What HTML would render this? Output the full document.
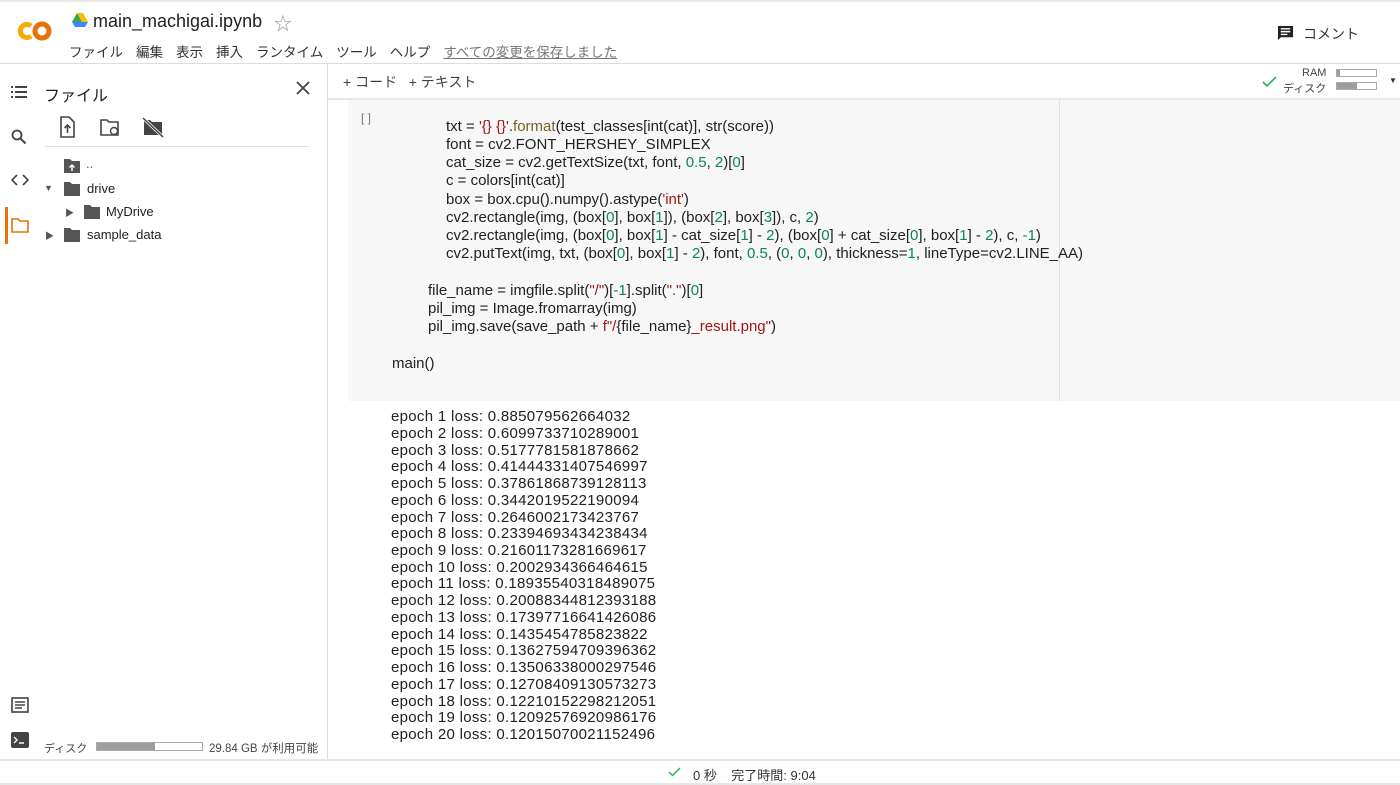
<!DOCTYPE html>
<html><head><meta charset="utf-8"><style>
*{box-sizing:border-box;margin:0;padding:0}
body{width:1400px;height:785px;overflow:hidden;background:#fff;font-family:"Liberation Sans","Noto Sans CJK JP",sans-serif;color:#212121;position:relative}
.abs{position:absolute}
.menu span{margin-right:13px}
.code div{position:absolute;white-space:pre;font-size:15px;letter-spacing:0;color:#212121}
.r{color:#a31515}.g{color:#098658}.b{color:#795e26}
.out div{position:absolute;left:391px;font-size:15px;letter-spacing:0.3px;color:#212121;white-space:pre}
.ft{font-size:13px}
</style></head><body>
<div class="abs" style="left:0;top:0;width:1400px;height:2px;background:#e8e8e8"></div>
<!-- logo -->
<svg class="abs" style="left:14px;top:18px" width="40" height="26" viewBox="0 0 40 26"><path d="M17 8a6.5 6.5 0 1 0 0 10" fill="none" stroke="#f9ab00" stroke-width="5"/><circle cx="28" cy="13" r="7" fill="none" stroke="#e8710a" stroke-width="5"/></svg>
<svg class="abs" style="left:72px;top:13px" width="16" height="14" viewBox="0 0 16 14"><path d="M5 0h6l5 9h-6z" fill="#fbbc04"/><path d="M5 0l5 9-3 5-7-5z" fill="#34a853"/><path d="M0 9l3 5h10l3-5z" fill="#4285f4"/></svg>
<div class="abs" style="left:93px;top:11px;font-size:18px">main_machigai.ipynb</div>
<div class="abs" style="left:274px;top:10px;font-size:18px;color:#999">☆</div>
<div class="abs menu" style="left:69px;top:41px;font-size:13.5px;color:#333"><span>ファイル</span><span>編集</span><span>表示</span><span>挿入</span><span>ランタイム</span><span>ツール</span><span>ヘルプ</span><span style="color:#777;text-decoration:underline">すべての変更を保存しました</span></div>
<svg class="abs" style="left:1277px;top:25px" width="17" height="17" viewBox="0 0 18 18"><path d="M1 1h16v12H4l-3 3z" fill="#222"/><path d="M4 4h10M4 7h10M4 10h7" stroke="#fff" stroke-width="1.5"/></svg>
<div class="abs" style="left:1303px;top:24px;font-size:14px;color:#333">コメント</div>
<div class="abs" style="left:0;top:63px;width:1400px;height:1px;background:#ddd"></div>
<!-- left rail -->
<svg class="abs" style="left:11px;top:85px" width="18" height="14"><g fill="#444"><rect x="0" y="1" width="2" height="2"/><rect x="0" y="6" width="2" height="2"/><rect x="0" y="11" width="2" height="2"/><rect x="4" y="1" width="12" height="2"/><rect x="4" y="6" width="12" height="2"/><rect x="4" y="11" width="12" height="2"/></g></svg>
<svg class="abs" style="left:11px;top:129px" width="16" height="16"><circle cx="6" cy="6" r="4.5" stroke="#444" stroke-width="1.8" fill="none"/><path d="M9.5 9.5l5 5" stroke="#444" stroke-width="2"/></svg>
<svg class="abs" style="left:11px;top:174px" width="18" height="12"><path d="M6 1L1 6l5 5M12 1l5 5-5 5" stroke="#444" stroke-width="1.6" fill="none"/></svg>
<div class="abs" style="left:5px;top:207px;width:3px;height:37px;background:#e8710a"></div>
<svg class="abs" style="left:11px;top:218px" width="18" height="15"><path d="M1 1h6l2 2h8v11H1z" fill="none" stroke="#e8710a" stroke-width="1.6"/></svg>
<svg class="abs" style="left:11px;top:697px" width="18" height="16"><rect x="1" y="1" width="16" height="14" fill="none" stroke="#444" stroke-width="1.6"/><path d="M4 5h10M4 8h10M4 11h7" stroke="#444" stroke-width="1.4"/></svg>
<svg class="abs" style="left:11px;top:732px" width="18" height="16"><rect x="0" y="0" width="18" height="16" rx="2" fill="#444"/><path d="M3 5l3 3-3 3M8 11h5" stroke="#fff" stroke-width="1.4" fill="none"/></svg>
<!-- file panel -->
<div class="abs" style="left:44px;top:82px;font-size:16px">ファイル</div>
<svg class="abs" style="left:296px;top:81px" width="14" height="14"><path d="M1 1l12 12M13 1L1 13" stroke="#444" stroke-width="1.8"/></svg>
<svg class="abs" style="left:58px;top:116px" width="120" height="22"><path d="M3 1h8l5 5v15H3z" fill="none" stroke="#444" stroke-width="1.6"/><path d="M9.5 17V9M6.5 12l3-3 3 3" stroke="#444" stroke-width="1.6" fill="none"/><path d="M43 4h6l2 2h9v13H43z" fill="none" stroke="#444" stroke-width="1.6"/><circle cx="56" cy="15" r="3.5" fill="#fff" stroke="#444" stroke-width="1.4"/><path d="M86 4h6l2 2h10v13H86z" fill="#444"/><path d="M85 2l20 19" stroke="#fff" stroke-width="3"/><path d="M85 2l20 19" stroke="#444" stroke-width="1.5"/></svg>
<div class="abs" style="left:45px;top:146px;width:264px;height:1px;background:#ddd"></div>
<svg class="abs" style="left:64px;top:159px" width="16" height="14"><path d="M0 0h6l2 2h8v12H0z" fill="#555"/><path d="M8 12V6M5.5 8.5L8 6l2.5 2.5" stroke="#fff" stroke-width="1.5" fill="none"/></svg>
<div class="abs ft" style="left:86px;top:156px;color:#555">..</div>
<div class="abs" style="left:44px;top:183px;font-size:9px;color:#555">▼</div>
<svg class="abs" style="left:64px;top:182px" width="16" height="14"><path d="M0 0h6l2 2h8v12H0z" fill="#555"/></svg>
<div class="abs ft" style="left:87px;top:181px">drive</div>
<div class="abs" style="left:65px;top:206px;font-size:9px;color:#555">▶</div>
<svg class="abs" style="left:84px;top:205px" width="16" height="14"><path d="M0 0h6l2 2h8v12H0z" fill="#555"/></svg>
<div class="abs ft" style="left:106px;top:204px">MyDrive</div>
<div class="abs" style="left:45px;top:229px;font-size:9px;color:#555">▶</div>
<svg class="abs" style="left:64px;top:228px" width="16" height="14"><path d="M0 0h6l2 2h8v12H0z" fill="#555"/></svg>
<div class="abs ft" style="left:87px;top:227px">sample_data</div>
<div class="abs" style="left:44px;top:740px;font-size:11px;color:#444">ディスク</div>
<div class="abs" style="left:96px;top:742px;width:107px;height:9px;border:1px solid #aaa;background:#fff"><div style="width:58px;height:7px;background:#9e9e9e"></div></div>
<div class="abs" style="left:209px;top:740px;font-size:11.5px;color:#444">29.84 GB が利用可能</div>
<div class="abs" style="left:327px;top:64px;width:1px;height:696px;background:#ddd"></div>
<!-- toolbar -->
<div class="abs" style="left:343px;top:72px;font-size:14px;color:#444">+ コード&nbsp;&nbsp;&nbsp;+ テキスト</div>
<svg class="abs" style="left:1262px;top:76px" width="15" height="12"><path d="M1 6l4 4 9-9" stroke="#2cb34a" stroke-width="1.6" fill="none"/></svg>
<div class="abs" style="left:1302px;top:67px;font-size:11px;color:#444">RAM</div>
<div class="abs" style="left:1283px;top:80px;font-size:11px;color:#444">ディスク</div>
<div class="abs" style="left:1336px;top:69px;width:41px;height:8px;border:1px solid #aaa"><div style="width:3px;height:6px;background:#9e9e9e"></div></div>
<div class="abs" style="left:1336px;top:82px;width:41px;height:8px;border:1px solid #aaa"><div style="width:20px;height:6px;background:#9e9e9e"></div></div>
<div class="abs" style="left:1389px;top:76px;font-size:8px;color:#333">▼</div>
<div class="abs" style="left:328px;top:98px;width:1072px;height:2px;background:#e6e6e6"></div>
<!-- cell -->
<div class="abs" style="left:348px;top:100px;width:1052px;height:301px;background:#f7f7f7"></div>
<div class="abs" style="left:1059px;top:100px;width:1px;height:301px;background:#e0e0e0"></div>
<div class="abs" style="left:361px;top:111px;font-size:12px;color:#777">[ ]</div>
<div class="code">
<div style="left:446px;top:118px">txt = <span class="r">'{} {}'</span>.<span class="b">format</span>(test_classes[int(cat)], str(score))</div>
<div style="left:446px;top:136px">font = cv2.FONT_HERSHEY_SIMPLEX</div>
<div style="left:446px;top:154px">cat_size = cv2.getTextSize(txt, font, <span class="g">0.5</span>, <span class="g">2</span>)[<span class="g">0</span>]</div>
<div style="left:446px;top:172px">c = colors[int(cat)]</div>
<div style="left:446px;top:191px">box = box.cpu().numpy().astype(<span class="r">'int'</span>)</div>
<div style="left:446px;top:209px">cv2.rectangle(img, (box[<span class="g">0</span>], box[<span class="g">1</span>]), (box[<span class="g">2</span>], box[<span class="g">3</span>]), c, <span class="g">2</span>)</div>
<div style="left:446px;top:227px">cv2.rectangle(img, (box[<span class="g">0</span>], box[<span class="g">1</span>] - cat_size[<span class="g">1</span>] - <span class="g">2</span>), (box[<span class="g">0</span>] + cat_size[<span class="g">0</span>], box[<span class="g">1</span>] - <span class="g">2</span>), c, <span class="g">-1</span>)</div>
<div style="left:446px;top:245px">cv2.putText(img, txt, (box[<span class="g">0</span>], box[<span class="g">1</span>] - <span class="g">2</span>), font, <span class="g">0.5</span>, (<span class="g">0</span>, <span class="g">0</span>, <span class="g">0</span>), thickness=<span class="g">1</span>, lineType=cv2.LINE_AA)</div>
<div style="left:428px;top:282px">file_name = imgfile.split(<span class="r">"/"</span>)[<span class="g">-1</span>].split(<span class="r">"."</span>)[<span class="g">0</span>]</div>
<div style="left:428px;top:300px">pil_img = Image.fromarray(img)</div>
<div style="left:428px;top:318px">pil_img.save(save_path + <span class="r">f"/</span>{file_name}<span class="r">_result.png"</span>)</div>
<div style="left:392px;top:355px">main()</div>
</div>
<!-- output -->
<div class="out">
<div style="top:408px">epoch 1 loss: 0.885079562664032</div>
<div style="top:425px">epoch 2 loss: 0.6099733710289001</div>
<div style="top:442px">epoch 3 loss: 0.5177781581878662</div>
<div style="top:458px">epoch 4 loss: 0.41444331407546997</div>
<div style="top:475px">epoch 5 loss: 0.37861868739128113</div>
<div style="top:492px">epoch 6 loss: 0.3442019522190094</div>
<div style="top:509px">epoch 7 loss: 0.2646002173423767</div>
<div style="top:525px">epoch 8 loss: 0.23394693434238434</div>
<div style="top:542px">epoch 9 loss: 0.21601173281669617</div>
<div style="top:559px">epoch 10 loss: 0.2002934366464615</div>
<div style="top:575px">epoch 11 loss: 0.18935540318489075</div>
<div style="top:592px">epoch 12 loss: 0.20088344812393188</div>
<div style="top:609px">epoch 13 loss: 0.17397716641426086</div>
<div style="top:626px">epoch 14 loss: 0.1435454785823822</div>
<div style="top:642px">epoch 15 loss: 0.13627594709396362</div>
<div style="top:659px">epoch 16 loss: 0.13506338000297546</div>
<div style="top:676px">epoch 17 loss: 0.12708409130573273</div>
<div style="top:693px">epoch 18 loss: 0.12210152298212051</div>
<div style="top:709px">epoch 19 loss: 0.12092576920986176</div>
<div style="top:726px">epoch 20 loss: 0.12015070021152496</div>
</div>
<!-- status -->
<div class="abs" style="left:0;top:759px;width:1400px;height:2px;background:#e6e6e6"></div>
<svg class="abs" style="left:668px;top:767px" width="13" height="10"><path d="M1 5l3.5 3.5L12 1" stroke="#2cb34a" stroke-width="1.5" fill="none"/></svg>
<div class="abs" style="left:693px;top:765px;font-size:13px;color:#333">0 秒&nbsp;&nbsp;&nbsp;&nbsp;完了時間: 9:04</div>
<div class="abs" style="left:0;top:783px;width:1400px;height:2px;background:#e6e6e6"></div>
</body></html>
